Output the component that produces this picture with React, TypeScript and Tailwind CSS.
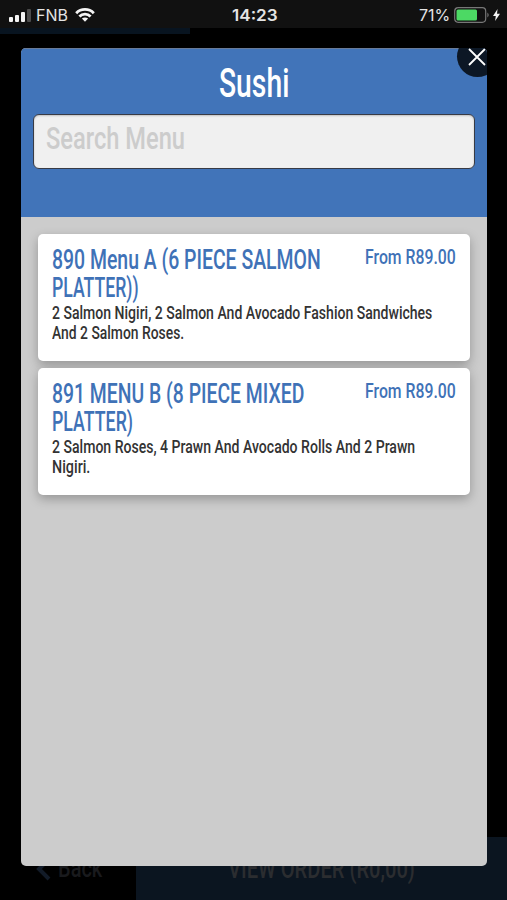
import { useLayoutEffect, useRef, useState } from 'react';

interface Line {
  text: string;
  width: number;
}

interface MenuItem {
  title: Line[];
  price: Line;
  description: Line[];
}

const items: MenuItem[] = [
  {
    title: [
      { text: '890 Menu A (6 PIECE SALMON', width: 269 },
      { text: 'PLATTER))', width: 87 },
    ],
    price: { text: 'From R89.00', width: 91 },
    description: [
      { text: '2 Salmon Nigiri, 2 Salmon And Avocado Fashion Sandwiches', width: 380 },
      { text: 'And 2 Salmon Roses.', width: 132 },
    ],
  },
  {
    title: [
      { text: '891 MENU B (8 PIECE MIXED', width: 252 },
      { text: 'PLATTER)', width: 81 },
    ],
    price: { text: 'From R89.00', width: 91 },
    description: [
      { text: '2 Salmon Roses, 4 Prawn And Avocado Rolls And 2 Prawn', width: 363 },
      { text: 'Nigiri.', width: 38 },
    ],
  },
];

// Squeezes a line of text to a fixed width, for a condensed display face
function Condensed({ text, width }: Line) {
  const ref = useRef<HTMLSpanElement>(null);
  const [scale, setScale] = useState(1);

  useLayoutEffect(() => {
    if (ref.current) setScale(width / ref.current.offsetWidth);
  }, [text, width]);

  return (
    <span className="block whitespace-nowrap" style={{ width }}>
      <span ref={ref} className="inline-block origin-left" style={{ transform: `scaleX(${scale})` }}>
        {text}
      </span>
    </span>
  );
}

function StatusBar() {
  return (
    <div className="grid grid-cols-3 items-center h-7 shrink-0 bg-[#111111] pl-[9px] pr-[7px] pt-[2px] text-[#e4e4e4] font-['Inter',sans-serif]">
      <div className="flex items-center">
        <svg width="23" height="13" viewBox="0 0 23 13" fill="#f4f4f4">
          <rect x="0" y="8" width="4" height="5" rx="1" />
          <rect x="6" y="6" width="4" height="7" rx="1" />
          <rect x="12" y="3" width="4" height="10" rx="1" />
          <rect x="18" y="0" width="4" height="13" rx="1" fill="#4b4b4b" />
        </svg>
        <span className="ml-1 text-[16px] leading-none">
          <Condensed text="FNB" width={32} />
        </span>
        <svg className="ml-[7px]" width="20" height="14" viewBox="0 0 20 14" fill="none" stroke="#f4f4f4" strokeWidth="2.8">
          <path d="M1.2 5.2 C6 .2 14 .2 18.8 5.2" />
          <path d="M4.4 8.5 C7.5 5.2 12.5 5.2 15.6 8.5" />
          <path d="M10 13.7 L6.9 10.6 C8.6 9 11.4 9 13.1 10.6Z" fill="#f4f4f4" stroke="none" />
        </svg>
      </div>
      <div className="flex justify-center pl-[1px] text-[16px] leading-none font-semibold">
        <Condensed text="14:23" width={46} />
      </div>
      <div className="flex items-center justify-end">
        <span className="text-[16px] leading-none">
          <Condensed text="71%" width={31} />
        </span>
        <svg className="ml-1" width="36" height="16" viewBox="0 0 36 16">
          <rect x=".7" y=".7" width="31" height="14.6" rx="3.5" fill="none" stroke="#777777" strokeWidth="1.2" />
          <rect x="2.5" y="2.5" width="20.5" height="11" rx="1.5" fill="#4cd964" />
          <path d="M33.4 5.5 Q36 8 33.4 10.5Z" fill="#777777" />
        </svg>
        <svg className="ml-[3px]" width="7" height="12" viewBox="0 0 8 12" preserveAspectRatio="none" fill="#f4f4f4">
          <path d="M5.2 0 L0 7 H3.2 L2.4 12 L8 4.8 H4.6Z" />
        </svg>
      </div>
    </div>
  );
}

function MenuCard({ item }: { item: MenuItem }) {
  return (
    <div className="h-[127px] rounded-[5px] bg-white px-3.5 pt-[11.5px] shadow-[0_4px_11px_rgba(0,0,0,0.27)]">
      <div className="flex justify-between text-[#3f72b7]">
        <h2 className="text-[27px] leading-[28px] font-medium">
          {item.title.map(line => (
            <Condensed key={line.text} {...line} />
          ))}
        </h2>
        <div className="text-[21px] leading-[22px] font-medium">
          <Condensed {...item.price} />
        </div>
      </div>
      <p className="pt-px text-[18.5px] leading-[20px] font-medium text-[#333333]">
        {item.description.map(line => (
          <Condensed key={line.text} {...line} />
        ))}
      </p>
    </div>
  );
}

export default function App() {
  return (
    <div className="relative flex flex-col w-[507px] h-[900px] overflow-hidden bg-black font-['Roboto',sans-serif]">
      <StatusBar />
      <div className="w-[190px] h-[6px] shrink-0 bg-[#081420]" />

      {/* Dimmed order bar behind the dialog */}
      <div className="mt-auto flex h-[63px] shrink-0 text-[27px] leading-[64px] font-medium text-[#2b2d30]">
        <div className="flex w-[136px] items-center pl-[36px] text-[25px] text-[#191a1d]">
          <svg className="mr-[7px]" width="15" height="24" viewBox="0 0 15 24" fill="none" stroke="#121b28" strokeWidth="4">
            <path d="M13 2 L3 12 L13 22" />
          </svg>
          <Condensed text="Back" width={44} />
        </div>
        <div className="flex-1 bg-[#0b1520] pl-[92px]">
          <Condensed text="VIEW ORDER (R0,00)" width={187} />
        </div>
      </div>

      <div className="absolute left-[21px] top-[48px] flex flex-col w-[466px] h-[818px] overflow-hidden rounded-[5px] bg-[#cccccc]">
        <header className="h-[169px] shrink-0 border-t border-[#687b99] bg-[#4174b9] px-3">
          <h1 className="flex h-[65px] justify-center pt-[7px] text-[40px] leading-[56px] font-medium text-white">
            <Condensed text="Sushi" width={70} />
          </h1>
          <div className="h-[55px] rounded-[6px] border-[1.5px] border-[#383b45] bg-[#f0f0f0] pl-3 text-[32px] leading-[47px] font-medium text-[#cccccc] shadow-[inset_0_1px_2px_rgba(0,0,0,0.2)]">
            <Condensed text="Search Menu" width={139} />
          </div>
        </header>
        <main className="flex flex-col gap-[7px] pl-[17px] pr-[17px] pt-[17px]">
          {items.map(item => (
            <MenuCard key={item.title[0].text} item={item} />
          ))}
        </main>
        <button className="absolute left-[436px] top-[-12px] flex size-[41px] items-center justify-center rounded-full bg-[#0c1725] pr-[2px]" aria-label="Close">
          <svg width="18" height="18" viewBox="0 0 18 18" stroke="white" strokeWidth="1.8">
            <path d="M1 1 L17 17 M17 1 L1 17" />
          </svg>
        </button>
      </div>
    </div>
  );
}
